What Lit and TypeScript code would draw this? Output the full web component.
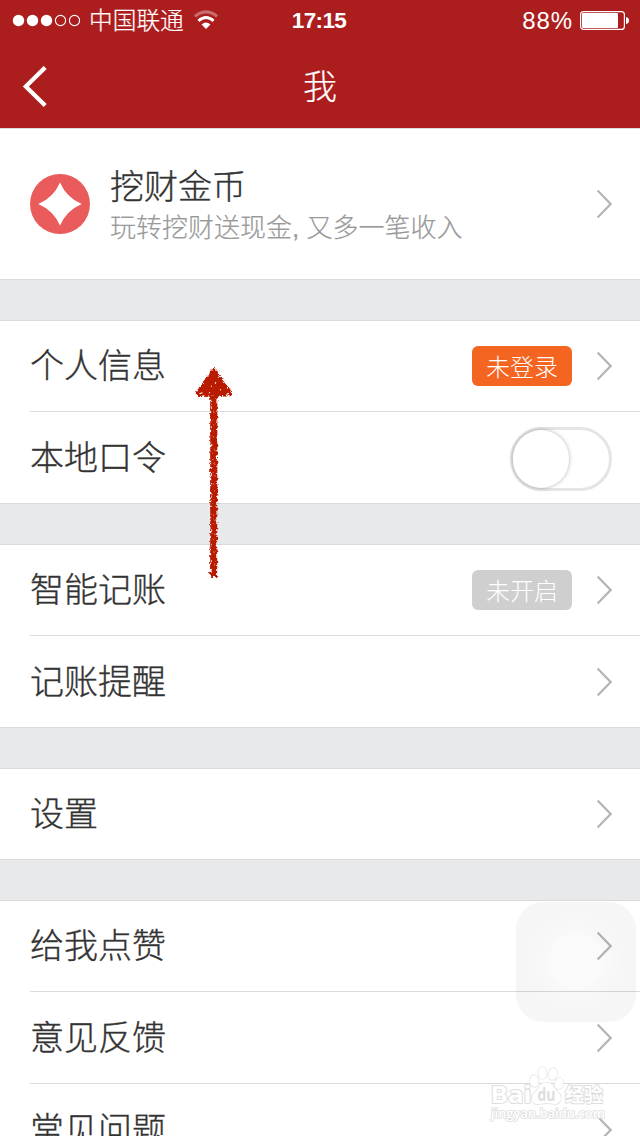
import { LitElement, html, css, svg, nothing } from "lit";
import { customElement, property } from "lit/decorators.js";

const FONT = css`"Liberation Sans", "Noto Sans CJK SC", sans-serif`;

@customElement("status-bar")
class StatusBar extends LitElement {
  static styles = css`
    :host { display: flex; height: 40px; align-items: center; color: #fff; position: relative;
      font: 300 24px/40px ${FONT}; padding: 0 11px 0 12px; justify-content: space-between; }
    .side { display: flex; align-items: center; height: 40px; }
    .carrier { margin-left: 7px; font-size: 23.7px; position: relative; top: 1px; -webkit-text-stroke: .2px; }
    .wifi { margin-left: 9px; }
    .time { position: absolute; left: 0; right: 0; top: 1px; text-align: center; font-weight: 700;
      font-size: 22.5px; letter-spacing: -0.6px; text-indent: -2px; }
    .pct { font-size: 24px; letter-spacing: 0.9px; margin-right: 7px; position: relative; top: 1px; }
    svg { display: block; }
  `;
  render() {
    return html`
      <div class="side">
        <svg width="70" height="40">
          ${[0, 1, 2, 3, 4].map((i) => svg`<circle cx=${6.5 + i * 14} cy="20.5" r=${i < 3 ? 5.7 : 5.1}
            fill=${i < 3 ? "#fff" : "none"} stroke="#fff" stroke-width=${i < 3 ? 0 : 1.1}></circle>`)}
        </svg>
        <span class="carrier">中国联通</span>
        <svg class="wifi" width="26" height="40" viewBox="0 0 26 40" fill="none" stroke="#fff">
          <path d="M1.9 16.4Q13 7.4 24.1 16.4" stroke-width="3" opacity=".35"></path>
          <path d="M5.4 20.9Q13 14.2 20.6 20.9" stroke-width="2.8"></path>
          <path d="M8.6 24.4Q13 20.6 17.4 24.4L13 28.9Z" fill="#fff" stroke="none"></path>
        </svg>
      </div>
      <div class="time">17:15</div>
      <div class="side">
        <span class="pct">88%</span>
        <svg width="49" height="40">
          <rect x=".6" y="11.6" width="43.8" height="17.8" rx="3" fill="none" stroke="#fff" stroke-width="1.2"></rect>
          <rect x="2" y="13" width="36" height="15" rx="1" fill="#fff"></rect>
          <path d="M46 17q3 .5 3 3.5t-3 3.5z" fill="#fff"></path>
        </svg>
      </div>`;
  }
}

@customElement("list-row")
class ListRow extends LitElement {
  @property() label = "";
  @property() badge = "";
  @property() tone = "";
  @property() control = "arrow";

  static styles = css`
    :host { display: block; padding-left: 30px; font: 300 34px/90px ${FONT}; color: #333; }
    .row { height: 91px; box-sizing: border-box; display: flex; align-items: center; padding-right: 28px; }
    :host([tall]) .row { height: 92px; }
    :host([short]) .row { height: 90px; }
    :host([divided]) .row { border-bottom: 1px solid #d9dadc; }
    .label { flex: 1; height: 90px; -webkit-text-stroke: .35px; }
    .badge { width: 100px; height: 40px; border-radius: 6px; color: #fff; text-align: center;
      font-size: 24px; line-height: 43px; }
    .hot { background: #f56522; }
    .off { background: #cfcfcf; }
    .arrow { display: block; margin-left: 24px; }
    .toggle { width: 102px; height: 64px; box-sizing: border-box; border: 3px solid #e5e5e5; border-radius: 32px;
      position: relative; top: 1px; display: flex; }
    .knob { width: 56px; height: 58px; border-radius: 29px; background: #fff;
      box-shadow: 0 0 4px rgba(0,0,0,.3); }
  `;
  render() {
    return html`<div class="row">
      <span class="label">${this.label}</span>
      ${this.badge ? html`<span class="badge ${this.tone}">${this.badge}</span>` : nothing}
      ${this.control === "toggle"
        ? html`<span class="toggle"><span class="knob"></span></span>`
        : html`<svg class="arrow" width="16" height="30" viewBox="0 0 16 30" fill="none" stroke="#b5b5b5" stroke-width="2.2">
            <path d="M1.6 1.6L14.6 15L1.6 28.4"></path></svg>`}
    </div>`;
  }
}

@customElement("app-root")
class AppRoot extends LitElement {
  static styles = css`
    :host { display: block; position: relative; height: 1136px; overflow: hidden; background: #e8e9eb;
      font-family: ${FONT}; font-weight: 300; }
    .top { background: #ac1e1e; height: 128px; }
    .nav { height: 88px; display: grid; grid-template-columns: 80px 1fr 80px; align-items: center;
      color: #fff; font-size: 34px; line-height: 88px; text-align: center; }
    .back { display: block; margin: 5px 0 0 22px; }
    .title { height: 88px; position: relative; top: 3px; -webkit-text-stroke: .2px; }
    .card { background: #fff; border-top: 1px solid #d9dadc; border-bottom: 1px solid #d9dadc; }
    .page { display: flex; flex-direction: column; gap: 40px; }
    .promo { height: 150px; display: flex; align-items: center; padding: 0 28px 0 30px; }
    .copy { flex: 1; margin-left: 20px; display: flex; flex-direction: column; position: relative; top: 3px; }
    .name { font-size: 34px; line-height: 42px; color: #333; -webkit-text-stroke: .35px; }
    .sub { font-size: 26px; line-height: 40px; color: #999; -webkit-text-stroke: .2px; }
    .stroke { position: absolute; left: 180px; top: 350px; }
    .assist { position: absolute; left: 516px; top: 902px; width: 120px; height: 120px; border-radius: 27px;
      background: radial-gradient(circle, rgba(0,0,0,.018) 0 28px, rgba(0,0,0,.026) 29px 36px, rgba(0,0,0,.031) 37px 44px, rgba(0,0,0,.036) 45px); }
    .mark { position: absolute; left: 480px; top: 1060px; }
  `;

  arrow() {
    return html`<svg class="stroke" width="70" height="240" viewBox="0 0 70 240">
      <defs><filter id="rough" x="-20%" y="-5%" width="140%" height="110%" color-interpolation-filters="sRGB">
        <feTurbulence type="fractalNoise" baseFrequency=".36" numOctaves="2" seed="7" result="n"></feTurbulence>
        <feDisplacementMap in="SourceGraphic" in2="n" scale="4.5" xChannelSelector="R" yChannelSelector="G" result="d"></feDisplacementMap>
        <feColorMatrix in="n" type="matrix" values="0 0 0 0 0  0 0 0 0 0  0 0 0 0 0  0 0 -10 0 7.1" result="holes"></feColorMatrix>
        <feComposite in="d" in2="holes" operator="in"></feComposite>
      </filter></defs>
      <g fill="#b81b00" filter="url(#rough)">
        <path d="M33.5 18Q36 18 39 23L52 42Q53 46 49 46.5L19 47Q14 46 16 42L29 23Q32 18 33.5 18Z"></path>
        <path d="M30.2 44H37.4L37.2 227H30.2Z"></path>
      </g>
      <path d="M33.7 19.5Q35.5 20 38 25L49 42Q50 45 47 45H20Q16.5 44 19 41L30 24Q32 20 33.7 19.5Z" fill="#b81b00"></path>
      <path d="M31.6 42H36.1L35.9 225H31.6Z" fill="#b81b00" opacity=".7"></path>
      <path d="M19.5 43.8l3-1M46.5 44.5l2.5-1.3M35 32.5l1 1M40 39.5l1 .6M31 36l.8.5M29 43l1-.5M38 27l.6.6" stroke="#fff" stroke-width="1.1"></path>
    </svg>`;
  }

  watermark() {
    return html`<svg class="mark" width="140" height="64" font-family="Open Sans, Noto Sans CJK SC, sans-serif"
      font-weight="700" fill="#fff" stroke="#dedede" stroke-width="2" paint-order="stroke" stroke-linejoin="round">
      <text x="10.5" y="43" font-size="24" textLength="41" lengthAdjust="spacingAndGlyphs">Bai</text>
      <g stroke-width="1.2">
        <ellipse cx="54.3" cy="21" rx="4.3" ry="6" transform="rotate(-12 54.3 21)"></ellipse>
        <ellipse cx="62.5" cy="13" rx="4.3" ry="6"></ellipse>
        <ellipse cx="72.7" cy="14" rx="4.3" ry="6" transform="rotate(12 72.7 14)"></ellipse>
        <ellipse cx="79" cy="23.5" rx="4.3" ry="5.8" transform="rotate(14 79 23.5)"></ellipse>
        <path d="M66.5 22.5C73 22.500 74 29 78 32C84 37 80 45 74 44C69 43 65 43 60 44C53 46 49 38 54 33C59 29 60 22.500 66.500 22.500Z"></path>
      </g>
      <text x="57.5" y="41" font-size="17" fill="#dedede" stroke="none" textLength="18" lengthAdjust="spacingAndGlyphs">du</text>
      <text x="85" y="42" font-size="19.5" textLength="38" lengthAdjust="spacingAndGlyphs">经验</text>
      <text x="11" y="58" font-size="13" font-weight="600" stroke-width="1.6" textLength="114" lengthAdjust="spacingAndGlyphs">jingyan.baidu.com</text>
    </svg>`;
  }

  render() {
    return html`
      <header class="top">
        <status-bar></status-bar>
        <div class="nav">
          <svg class="back" width="26" height="42" viewBox="0 0 26 42" fill="none" stroke="#fff" stroke-width="4.2">
            <path d="M23.2 1.4L3.8 20.5L23.2 39.6"></path></svg>
          <span class="title">我</span>
        </div>
      </header>
      <main class="page">
        <section class="card">
          <div class="promo">
            <svg width="60" height="60"><circle cx="30" cy="30" r="30" fill="#ea5c5c"></circle>
              <path d="M30 8.4Q36.5 23.5 51.7 30Q36.5 36.5 30 51.6Q23.5 36.5 8.3 30Q23.5 23.5 30 8.4Z" fill="#fff"></path></svg>
            <div class="copy"><span class="name">挖财金币</span><span class="sub">玩转挖财送现金, 又多一笔收入</span></div>
            <svg width="16" height="30" fill="none" stroke="#b5b5b5" stroke-width="2.2"><path d="M1.6 1.6L14.6 15L1.6 28.4"></path></svg>
          </div>
        </section>
        <section class="card">
          <list-row divided label="个人信息" badge="未登录" tone="hot"></list-row>
          <list-row label="本地口令" control="toggle"></list-row>
        </section>
        <section class="card">
          <list-row divided label="智能记账" badge="未开启" tone="off"></list-row>
          <list-row label="记账提醒"></list-row>
        </section>
        <section class="card"><list-row short label="设置"></list-row></section>
        <section class="card">
          <list-row divided label="给我点赞"></list-row>
          <list-row divided tall label="意见反馈"></list-row>
          <list-row label="常见问题"></list-row>
        </section>
      </main>
      ${this.arrow()}
      <div class="assist"></div>
      ${this.watermark()}`;
  }
}
